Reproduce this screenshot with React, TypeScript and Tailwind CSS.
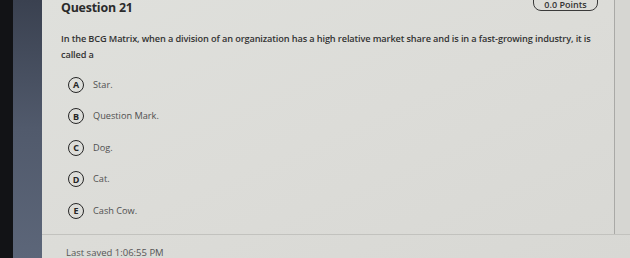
import React from "react";

const options = [
  { key: "A", label: "Star." },
  { key: "B", label: "Question Mark." },
  { key: "C", label: "Dog." },
  { key: "D", label: "Cat." },
  { key: "E", label: "Cash Cow." },
];

function OptionRow({ letter, label }: { letter: string; label: string }) {
  return (
    <div className="flex items-center h-[31.5px]">
      <span className="flex items-center justify-center w-[16px] h-[16px] rounded-full border-[1.8px] border-[#262626] text-[9px] font-bold text-[#262626] leading-none">
        {letter}
      </span>
      <span className="ml-[9px] text-[9.2px] text-[#505050]">{label}</span>
    </div>
  );
}

export default function App() {
  return (
    <div className="flex w-[630px] h-[258px] overflow-hidden font-['Open_Sans',sans-serif]">
      {/* dark window edge */}
      <div className="w-[13px] shrink-0 bg-[#121316]" />
      <div className="w-[29px] shrink-0 bg-gradient-to-b from-[#3a4150] via-[#515a6c] to-[#5c6679]" />

      <div className="flex-1 flex flex-col bg-gradient-to-br from-[#dfe0dc] via-[#dcdcd8] to-[#d8d8d4]">
        <div className="flex h-[234px]">
          <div className="flex-1 flex flex-col pl-[19px] pr-[18px]">
            <div className="flex items-start justify-between">
              <h1 className="text-[12.4px] font-bold text-[#2b2b2b] leading-[16px] tracking-[-0.2px]">
                Question 21
              </h1>
              <span className="-mt-[8px] mr-[-2px] h-[19px] w-[65px] rounded-[8px] border-[1.5px] border-[#3a3a3a] text-[9px] font-semibold text-[#333] flex items-end justify-center leading-[11px]">
                0.0 Points
              </span>
            </div>

            <p className="mt-[15px] max-w-[535px] text-[9.2px] leading-[15.5px] text-[#333] tracking-[-0.12px] font-semibold">
              In the BCG Matrix, when a division of an organization has a high relative market share and is in a
              fast-growing industry, it is called a
            </p>

            <div className="mt-[7px] ml-[7px] flex flex-col">
              {options.map((o) => (
                <OptionRow key={o.key} letter={o.key} label={o.label} />
              ))}
            </div>
          </div>
          <div className="w-[16px] shrink-0 border-l border-[#a9a9a6] bg-[#d6d6d2]" />
        </div>

        <div className="flex-1 border-t border-[#c2c2be] pl-[24px] pt-[13px]">
          <span className="text-[9.5px] text-[#555] leading-none block">Last saved 1:06:55 PM</span>
        </div>
      </div>
    </div>
  );
}
